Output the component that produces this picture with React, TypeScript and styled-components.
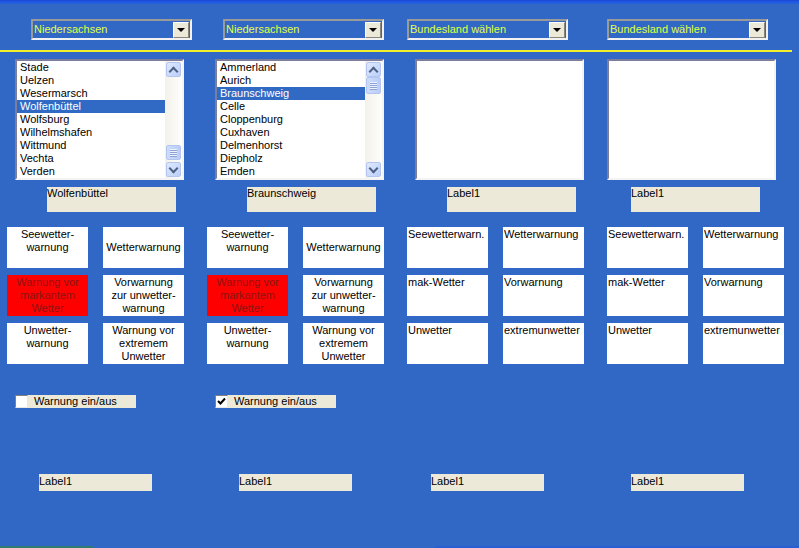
import React from 'react'
import styled, { createGlobalStyle } from 'styled-components'

const GlobalStyle = createGlobalStyle`
    html, body {
        margin: 0;
        padding: 0;
        background: #3168c6;
    }
    body {
        font-family: "Liberation Sans", Arial, sans-serif;
        font-size: 11px;
    }
`

type ListData = { items: string[]; selected: number; thumbTop: number; thumbHeight: number }

const lists: ListData[] = [
    {
        items: ['Stade', 'Uelzen', 'Wesermarsch', 'Wolfenbüttel', 'Wolfsburg', 'Wilhelmshafen', 'Wittmund', 'Vechta', 'Verden'],
        selected: 3,
        thumbTop: 68,
        thumbHeight: 15,
    },
    {
        items: ['Ammerland', 'Aurich', 'Braunschweig', 'Celle', 'Cloppenburg', 'Cuxhaven', 'Delmenhorst', 'Diepholz', 'Emden'],
        selected: 2,
        thumbTop: 0,
        thumbHeight: 17,
    },
]

// long captions are centered, short ones stay top-left
const longTiles: { text: string[]; red?: boolean; lift?: boolean }[] = [
    { text: ['Seewetter-', 'warnung'], lift: true },
    { text: ['Wetterwarnung'] },
    { text: ['Warnung vor', 'markantem', 'Wetter'], red: true },
    { text: ['Vorwarnung', 'zur unwetter-', 'warnung'] },
    { text: ['Unwetter-', 'warnung'], lift: true },
    { text: ['Warnung vor', 'extremem', 'Unwetter'] },
]

const shortTiles = ['Seewetterwarn.', 'Wetterwarnung', 'mak-Wetter', 'Vorwarnung', 'Unwetter', 'extremunwetter']

const App: React.FC = () => {
    return (
        <>
            <GlobalStyle />
            <Screen>
                <TopStrip />

                <Band $top={15}>
                    <Combo $x={24}><ComboText>Niedersachsen</ComboText><ComboButton><Arrow /></ComboButton></Combo>
                    <Combo $x={16}><ComboText>Niedersachsen</ComboText><ComboButton><Arrow /></ComboButton></Combo>
                    <Combo $x={0}><ComboText>Bundesland wählen</ComboText><ComboButton><Arrow /></ComboButton></Combo>
                    <Combo $x={0}><ComboText>Bundesland wählen</ComboText><ComboButton><Arrow /></ComboButton></Combo>
                </Band>

                <Rule />

                <Band $top={7}>
                    {lists.map((l, i) => (
                        <ListBox key={i} $x={8}>
                            <Items>
                                {l.items.map((it, j) => (
                                    <Item key={it} $selected={j === l.selected}>{it}</Item>
                                ))}
                            </Items>
                            <ScrollBar>
                                <ScrollButton><Chevron $up /></ScrollButton>
                                <Track>
                                    <Thumb style={{ marginTop: l.thumbTop, height: l.thumbHeight }}>
                                        <Grip /><Grip /><Grip /><Grip />
                                    </Thumb>
                                </Track>
                                <ScrollButton><Chevron /></ScrollButton>
                            </ScrollBar>
                        </ListBox>
                    ))}
                    <ListBox $x={8} />
                    <ListBox $x={0} />
                </Band>

                <Band $top={7}>
                    <Caption $x={40}>Wolfenbüttel</Caption>
                    <Caption $x={40}>Braunschweig</Caption>
                    <Caption $x={40}>Label1</Caption>
                    <Caption $x={24}>Label1</Caption>
                </Band>

                <Band $top={15}>
                    {[0, 1].map(c => (
                        <TileGrid key={c}>
                            {longTiles.map((t, i) => (
                                <Tile key={i} $red={t.red} $lift={t.lift}>
                                    {t.text.map(line => <span key={line}>{line}</span>)}
                                </Tile>
                            ))}
                        </TileGrid>
                    ))}
                    {[0, 1].map(c => (
                        <TileGrid key={c}>
                            {shortTiles.map(t => <PlainTile key={t}>{t}</PlainTile>)}
                        </TileGrid>
                    ))}
                </Band>

                <Band $top={31}>
                    <Check $x={8}><CheckBox /><span>Warnung ein/aus</span></Check>
                    <Check $x={8}>
                        <CheckBox>
                            <svg width="9" height="9" viewBox="0 0 9 9">
                                <path d="M1 4 L3.5 6.5 L8 1.5" fill="none" stroke="#000" strokeWidth="2" />
                            </svg>
                        </CheckBox>
                        <span>Warnung ein/aus</span>
                    </Check>
                </Band>

                <Band $top={66}>
                    <FootLabel $x={32}>Label1</FootLabel>
                    <FootLabel $x={32}>Label1</FootLabel>
                    <FootLabel $x={24}>Label1</FootLabel>
                    <FootLabel $x={24}>Label1</FootLabel>
                </Band>

                <TaskEdge>
                    <TaskStart />
                    <TaskBar />
                </TaskEdge>
            </Screen>
        </>
    )
}

const Screen = styled.div`
    width: 799px;
    height: 548px;
    background: #3168c6;
    display: flex;
    flex-direction: column;
    overflow: hidden;
`

const TopStrip = styled.div`
    height: 4px;
    background: linear-gradient(#1a44d4, #1f5ae6 50%, #2a61d8);
`

const Band = styled.div<{ $top: number }>`
    margin-top: ${p => p.$top}px;
    padding-left: 7px;
    display: grid;
    grid-template-columns: repeat(4, 200px);
    align-items: start;
`

const Combo = styled.div<{ $x: number }>`
    margin-left: ${p => p.$x}px;
    width: 161px;
    height: 21px;
    box-sizing: border-box;
    border: 2px solid;
    border-color: #9a9a9a #f2f2f2 #f2f2f2 #9a9a9a;
    display: flex;
    align-items: center;
    justify-content: space-between;
    padding: 0 1px 0 1px;
`

const ComboText = styled.span`
    color: #e2ff48;
    line-height: 13px;
`

const ComboButton = styled.div`
    width: 16px;
    height: 16px;
    box-sizing: border-box;
    background: #ece9d8;
    border: 1px solid;
    border-color: #ffffff #8a877a #8a877a #ffffff;
    display: flex;
    align-items: center;
    justify-content: center;
`

const Arrow = styled.div`
    width: 0;
    height: 0;
    border-left: 4px solid transparent;
    border-right: 4px solid transparent;
    border-top: 4px solid #000;
    margin-top: 1px;
`

const Rule = styled.div`
    margin-top: 10px;
    width: 792px;
    height: 2px;
    background: #f2ee2a;
`

const ListBox = styled.div<{ $x: number }>`
    margin-left: ${p => p.$x}px;
    width: 169px;
    height: 121px;
    box-sizing: border-box;
    border: 2px solid;
    border-color: #7d7e9c #f4f4f4 #f4f4f4 #7d7e9c;
    background: #fff;
    display: flex;
`

const Items = styled.div`
    flex: 1;
    display: flex;
    flex-direction: column;
`

const Item = styled.div<{ $selected?: boolean }>`
    height: 13px;
    line-height: 13px;
    padding-left: 3px;
    color: ${p => (p.$selected ? '#fff' : '#000')};
    background: ${p => (p.$selected ? '#316ac5' : 'transparent')};
    white-space: nowrap;
`

const ScrollBar = styled.div`
    width: 17px;
    display: flex;
    flex-direction: column;
    background: linear-gradient(90deg, #f3f1ea, #fefefb);
    padding: 1px 0;
    box-sizing: border-box;
`

const ScrollButton = styled.div`
    height: 15px;
    margin: 0 1px;
    box-sizing: border-box;
    border: 1px solid #b4c6f0;
    border-radius: 2px;
    background: linear-gradient(135deg, #dfe9ff, #bccffa);
    display: flex;
    align-items: center;
    justify-content: center;
`

const Chevron = styled.div<{ $up?: boolean }>`
    width: 5px;
    height: 5px;
    border-left: 2px solid #4d6185;
    border-top: 2px solid #4d6185;
    transform: rotate(${p => (p.$up ? 45 : 225)}deg);
    margin-top: ${p => (p.$up ? 3 : -3)}px;
`

const Track = styled.div`
    flex: 1;
    display: flex;
    flex-direction: column;
`

const Thumb = styled.div`
    margin: 0 1px;
    box-sizing: border-box;
    border: 1px solid #b4c6f0;
    border-radius: 2px;
    background: linear-gradient(90deg, #cddcfc, #bacdf8);
    display: flex;
    flex-direction: column;
    align-items: center;
    justify-content: center;
    gap: 1px;
`

const Grip = styled.div`
    width: 7px;
    height: 1px;
    background: #eef3ff;
    box-shadow: 0 1px 0 #8ca2d4;
`

const Caption = styled.div<{ $x: number }>`
    margin-left: ${p => p.$x}px;
    width: 129px;
    height: 25px;
    background: #ece9d8;
    color: #000;
    line-height: 13px;
    white-space: nowrap;
`

const TileGrid = styled.div`
    display: grid;
    grid-template-columns: 81px 81px;
    grid-auto-rows: 41px;
    column-gap: 15px;
    row-gap: 7px;
`

const Tile = styled.div<{ $red?: boolean; $lift?: boolean }>`
    background: ${p => (p.$red ? '#ff0000' : '#fff')};
    color: ${p => (p.$red ? '#8c1414' : '#000')};
    display: flex;
    flex-direction: column;
    align-items: center;
    justify-content: center;
    line-height: 13px;
    padding-bottom: ${p => (p.$lift ? 13 : 0)}px;
    box-sizing: border-box;
    text-align: center;
    white-space: nowrap;
`

const PlainTile = styled.div`
    background: #fff;
    color: #000;
    line-height: 13px;
    padding: 1px 0 0 1px;
    box-sizing: border-box;
    white-space: nowrap;
`

const Check = styled.div<{ $x: number }>`
    margin-left: ${p => p.$x}px;
    width: 121px;
    height: 13px;
    background: #ece9d8;
    display: flex;
    align-items: center;
    gap: 6px;
    line-height: 13px;
    color: #000;
`

const CheckBox = styled.div`
    width: 13px;
    height: 13px;
    box-sizing: border-box;
    background: #fff;
    border: 1px solid;
    border-color: #808080 #e8e8e8 #e8e8e8 #808080;
    display: flex;
    align-items: center;
    justify-content: center;
`

const FootLabel = styled.div<{ $x: number }>`
    margin-left: ${p => p.$x}px;
    width: 113px;
    height: 17px;
    background: #ece9d8;
    color: #000;
    line-height: 14px;
`

const TaskEdge = styled.div`
    margin-top: auto;
    height: 2px;
    display: flex;
`

const TaskStart = styled.div`
    width: 93px;
    background: #2f7d70;
`

const TaskBar = styled.div`
    margin-left: 342px;
    flex: 1;
    background: #2a5fd4;
`

export default App
